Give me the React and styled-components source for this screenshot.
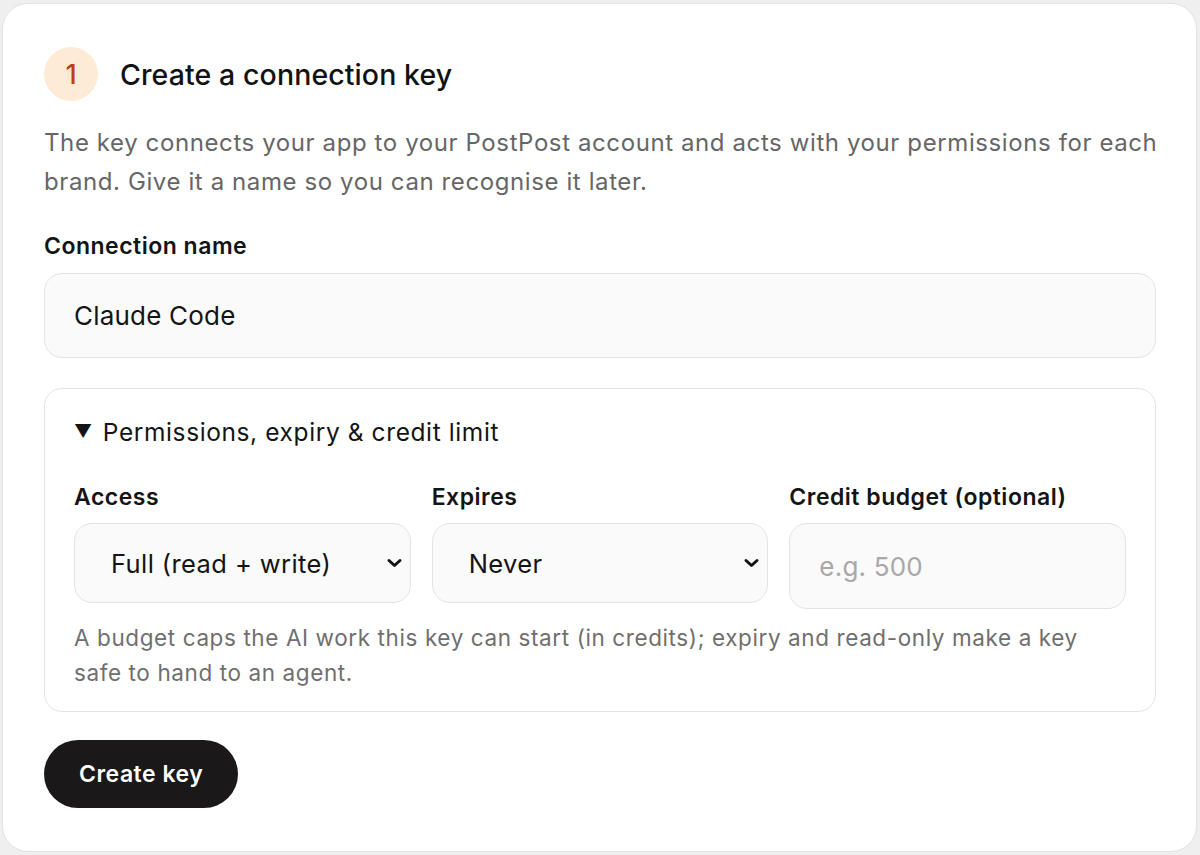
import styled, { createGlobalStyle } from "styled-components";

const GlobalStyle = createGlobalStyle`
  html, body {
    margin: 0;
    background: #efefef;
  }
  body {
    padding: 3px 3px 3px 2px;
    font-family: Inter, "Noto Sans", sans-serif;
    color: #141414;
  }
  * {
    box-sizing: border-box;
  }
`;

const Card = styled.section`
  width: 1195px;
  height: 849px;
  background: #ffffff;
  border: 1px solid #e2e2e2;
  border-radius: 26px;
  padding: 43px 40px 0 41px;
  display: flex;
  flex-direction: column;
  align-items: flex-start;
`;

const Header = styled.div`
  display: flex;
  align-items: center;
  gap: 22px;
`;

const StepBadge = styled.div`
  width: 54px;
  height: 54px;
  border-radius: 50%;
  background: #fdebd5;
  color: #bf3f12;
  display: flex;
  align-items: center;
  justify-content: center;
  font-size: 27px;
  font-weight: 500;
`;

const Title = styled.h2`
  margin: 0;
  font-size: 28.5px;
  font-weight: 500;
  letter-spacing: 0.1px;
  color: #121212;
`;

const Intro = styled.p`
  margin: 22px 0 0;
  font-size: 24px;
  line-height: 39px;
  letter-spacing: 0.6px;
  color: #666666;
  width: 1125px;
`;

const FieldLabel = styled.label`
  display: block;
  font-size: 23px;
  font-weight: 600;
  line-height: 30px;
  letter-spacing: 0.5px;
  color: #141414;
  margin-top: ${(p) => p.$top ?? 0}px;
`;

const TextInput = styled.input`
  width: ${(p) => p.$width ?? "100%"};
  height: ${(p) => p.$height ?? 85}px;
  margin-top: ${(p) => p.$top ?? 12}px;
  border: 1px solid #e3e3e3;
  border-radius: 18px;
  background: #fafafa;
  padding: 0 29px;
  font-family: inherit;
  font-size: 26px;
  letter-spacing: 0.2px;
  color: #141414;
  outline: none;

  &::placeholder {
    color: #a8a8a8;
  }
`;

const Details = styled.details`
  width: 1112px;
  margin: 30px 0 0;
  border: 1px solid #e3e3e3;
  border-radius: 18px;
  padding: 28px 29px 21px;
`;

const Summary = styled.summary`
  list-style: none;
  display: flex;
  align-items: center;
  gap: 10px;
  font-size: 24.5px;
  line-height: 30px;
  letter-spacing: 0.6px;
  color: #141414;
  cursor: pointer;

  &::-webkit-details-marker {
    display: none;
  }
`;

const Marker = styled.span`
  font-size: 18px;
  line-height: 1;
`;

const FieldGrid = styled.div`
  display: grid;
  grid-template-columns: repeat(3, 1fr);
  gap: 21px;
  margin-top: 35px;
  align-items: start;
`;

const Field = styled.div`
  display: flex;
  flex-direction: column;
  gap: 11px;
`;

const SelectWrap = styled.div`
  position: relative;
  height: 80px;
`;

const Select = styled.select`
  appearance: none;
  width: 100%;
  height: 100%;
  border: 1px solid #e3e3e3;
  border-radius: 18px;
  background: #fafafa;
  padding: 0 40px 0 36px;
  font-family: inherit;
  font-size: 25.5px;
  letter-spacing: 0.4px;
  color: #141414;
  outline: none;
`;

const Chevron = styled.svg`
  position: absolute;
  right: 8px;
  top: 50%;
  transform: translateY(-50%);
  pointer-events: none;
`;

const Hint = styled.p`
  margin: 11px 0 0;
  font-size: 22.5px;
  line-height: 35px;
  letter-spacing: 0.6px;
  color: #6f6f6f;
`;

const PrimaryButton = styled.button`
  margin: 28px 0 0;
  height: 68px;
  padding: 0 35px;
  border: none;
  border-radius: 34px;
  background: #1a1818;
  color: #ffffff;
  font-family: inherit;
  font-size: 23px;
  font-weight: 600;
  letter-spacing: 0.5px;
  cursor: pointer;
`;

function ChevronIcon() {
  return (
    <Chevron width="17" height="16" viewBox="0 0 17 16" fill="none">
      <path d="M3 5.5 L8.5 10.5 L14 5.5" stroke="#141414" strokeWidth="3" strokeLinecap="round" strokeLinejoin="round" />
    </Chevron>
  );
}

export default function App() {
  return (
    <>
      <GlobalStyle />
      <Card>
        <Header>
          <StepBadge>1</StepBadge>
          <Title>Create a connection key</Title>
        </Header>
        <Intro>
          The key connects your app to your PostPost account and acts with your permissions for each
          brand. Give it a name so you can recognise it later.
        </Intro>
        <FieldLabel htmlFor="conn-name" $top={30}>Connection name</FieldLabel>
        <TextInput id="conn-name" defaultValue="Claude Code" $width="1112px" />
        <Details open>
          <Summary>
            <Marker>▼</Marker>
            Permissions, expiry &amp; credit limit
          </Summary>
          <FieldGrid>
            <Field>
              <FieldLabel>Access</FieldLabel>
              <SelectWrap>
                <Select defaultValue="full">
                  <option value="full">Full (read + write)</option>
                  <option value="read">Read only</option>
                </Select>
                <ChevronIcon />
              </SelectWrap>
            </Field>
            <Field>
              <FieldLabel>Expires</FieldLabel>
              <SelectWrap>
                <Select defaultValue="never">
                  <option value="never">Never</option>
                  <option value="30">In 30 days</option>
                  <option value="90">In 90 days</option>
                </Select>
                <ChevronIcon />
              </SelectWrap>
            </Field>
            <Field>
              <FieldLabel>Credit budget (optional)</FieldLabel>
              <TextInput placeholder="e.g. 500" $height={86} $top={0} />
            </Field>
          </FieldGrid>
          <Hint>
            A budget caps the AI work this key can start (in credits); expiry and read-only make a key
            safe to hand to an agent.
          </Hint>
        </Details>
        <PrimaryButton>Create key</PrimaryButton>
      </Card>
    </>
  );
}
